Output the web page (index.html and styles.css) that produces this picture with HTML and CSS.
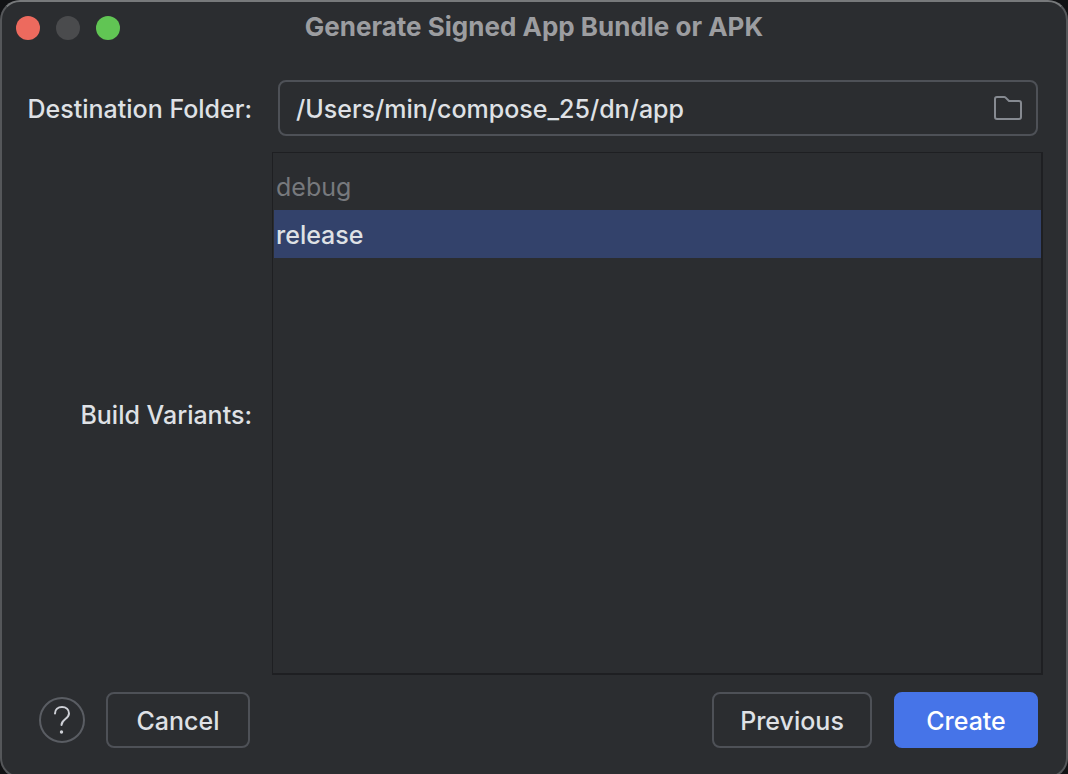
FILE: index.html
```
<!DOCTYPE html>
<html lang="en">
<head>
<meta charset="utf-8">
<title>Generate Signed App Bundle or APK</title>
<link rel="stylesheet" href="styles.css">
</head>
<body>
<main class="dialog">
  <header class="titlebar">
    <div class="lights">
      <button class="light close" aria-label="Close"></button>
      <button class="light minimize" aria-label="Minimize" disabled></button>
      <button class="light expand" aria-label="Zoom"></button>
    </div>
    <h1 class="title">Generate Signed App Bundle or APK</h1>
  </header>
  <form class="form">
    <label class="label" for="folder">Destination Folder:</label>
    <div class="field">
      <input class="path" id="folder" type="text" value="/Users/min/compose_25/dn/app">
      <button class="browse" type="button" aria-label="Browse">
        <svg width="32" height="32" viewBox="0 0 32 32" fill="none" stroke="currentColor" stroke-width="2"><path d="M3 7a2 2 0 0 1 2-2h7.200a2 2 0 0 1 1.400.600L17 9h10a2 2 0 0 1 2 2v14a2 2 0 0 1-2 2H5a2 2 0 0 1-2-2z"/></svg>
      </button>
    </div>
    <span class="label" id="variants-label">Build Variants:</span>
    <ul class="variants" role="listbox" aria-labelledby="variants-label">
      <li class="variant muted" role="option" aria-selected="false">debug</li>
      <li class="variant selected" role="option" aria-selected="true">release</li>
    </ul>
  </form>
  <footer class="actions">
    <button class="help" type="button" aria-label="Help">
      <svg width="46" height="46" viewBox="0 0 46 46" fill="none" stroke="currentColor" stroke-width="2" stroke-linecap="round"><circle class="ring" cx="23" cy="23" r="22"/><path d="M16 16.500c0-4 3-6.500 7-6.500s7 2.500 7 6.500c0 5.500-7.500 5.500-7.500 11.500"/><circle cx="22.500" cy="35" r="1.700" fill="currentColor" stroke="none"/></svg>
    </button>
    <button class="button" type="button">Cancel</button>
    <span class="spacer"></span>
    <button class="button previous" type="button">Previous</button>
    <button class="button primary" type="button">Create</button>
  </footer>
</main>
</body>
</html>
```
FILE: styles.css
```
* { box-sizing: border-box; }
body {
  margin: 0;
  height: 100vh;
  overflow: hidden;
  background: #111214;
  color: #dfe1e5;
  font: 500 25px/32px Inter, sans-serif;
}
button, input { font: inherit; color: inherit; }
.dialog {
  display: flex;
  flex-direction: column;
  min-height: calc(100vh + 4px);
  border: 2px solid #55575a;
  border-top-color: #77797b;
  border-radius: 20px;
  background: #2b2d30;
}
.titlebar {
  display: grid;
  grid-template-columns: 1fr auto 1fr;
  align-items: center;
  height: 52px;
  padding: 0 14px;
}
.lights { display: flex; gap: 16px; }
.light { width: 24px; height: 24px; padding: 0; border: 0; border-radius: 50%; }
.close { background: #ed6a5e; }
.minimize { background: #4a4b4d; }
.expand { background: #61c554; }
.title { margin: 0; padding-bottom: 2px; color: #9c9da0; font-size: 26px; font-weight: 700; }
.form {
  flex: 1;
  display: grid;
  grid-template-columns: 230px 1fr;
  grid-template-rows: 56px 1fr;
  gap: 16px 20px;
  align-items: center;
  padding: 26px 23px 0 20px;
}
.label { padding-top: 2px; text-align: right; white-space: nowrap; }
.field {
  display: flex;
  align-items: center;
  height: 56px;
  margin: 0 5px 0 6px;
  padding: 0 12px 0 16px;
  border: 2px solid #4e5157;
  border-radius: 8px;
}
.path {
  flex: 1;
  min-width: 0;
  padding: 2px 0 0;
  border: 0;
  outline: 0;
  background: none;
}
.browse { display: flex; padding: 0; border: 0; background: none; color: #868a91; }
.variants {
  align-self: stretch;
  margin: 0;
  padding: 9px 0 9px 1px;
  border: 1px solid #1e1f22;
  border-width: 1px 2px 2px 1px;
  list-style: none;
}
.variant { height: 48px; padding: 9px 2px 7px; }
.muted { color: #77797d; font-weight: 400; }
.selected { background: #33426b; }
.actions { display: flex; align-items: center; padding: 17px 28px 28px 37px; }
.help { display: flex; margin-right: 21px; padding: 0; border: 0; background: none; color: #ced0d6; }
.ring { stroke: #5a5d63; }
.spacer { flex: 1; }
.button {
  width: 144px;
  height: 56px;
  padding: 2px 0 0;
  border: 2px solid #4e5157;
  border-radius: 8px;
  background: none;
}
.previous { width: 160px; margin-right: 22px; }
.primary { border-color: #4674e8; background: #4674e8; color: #fff; }
```
